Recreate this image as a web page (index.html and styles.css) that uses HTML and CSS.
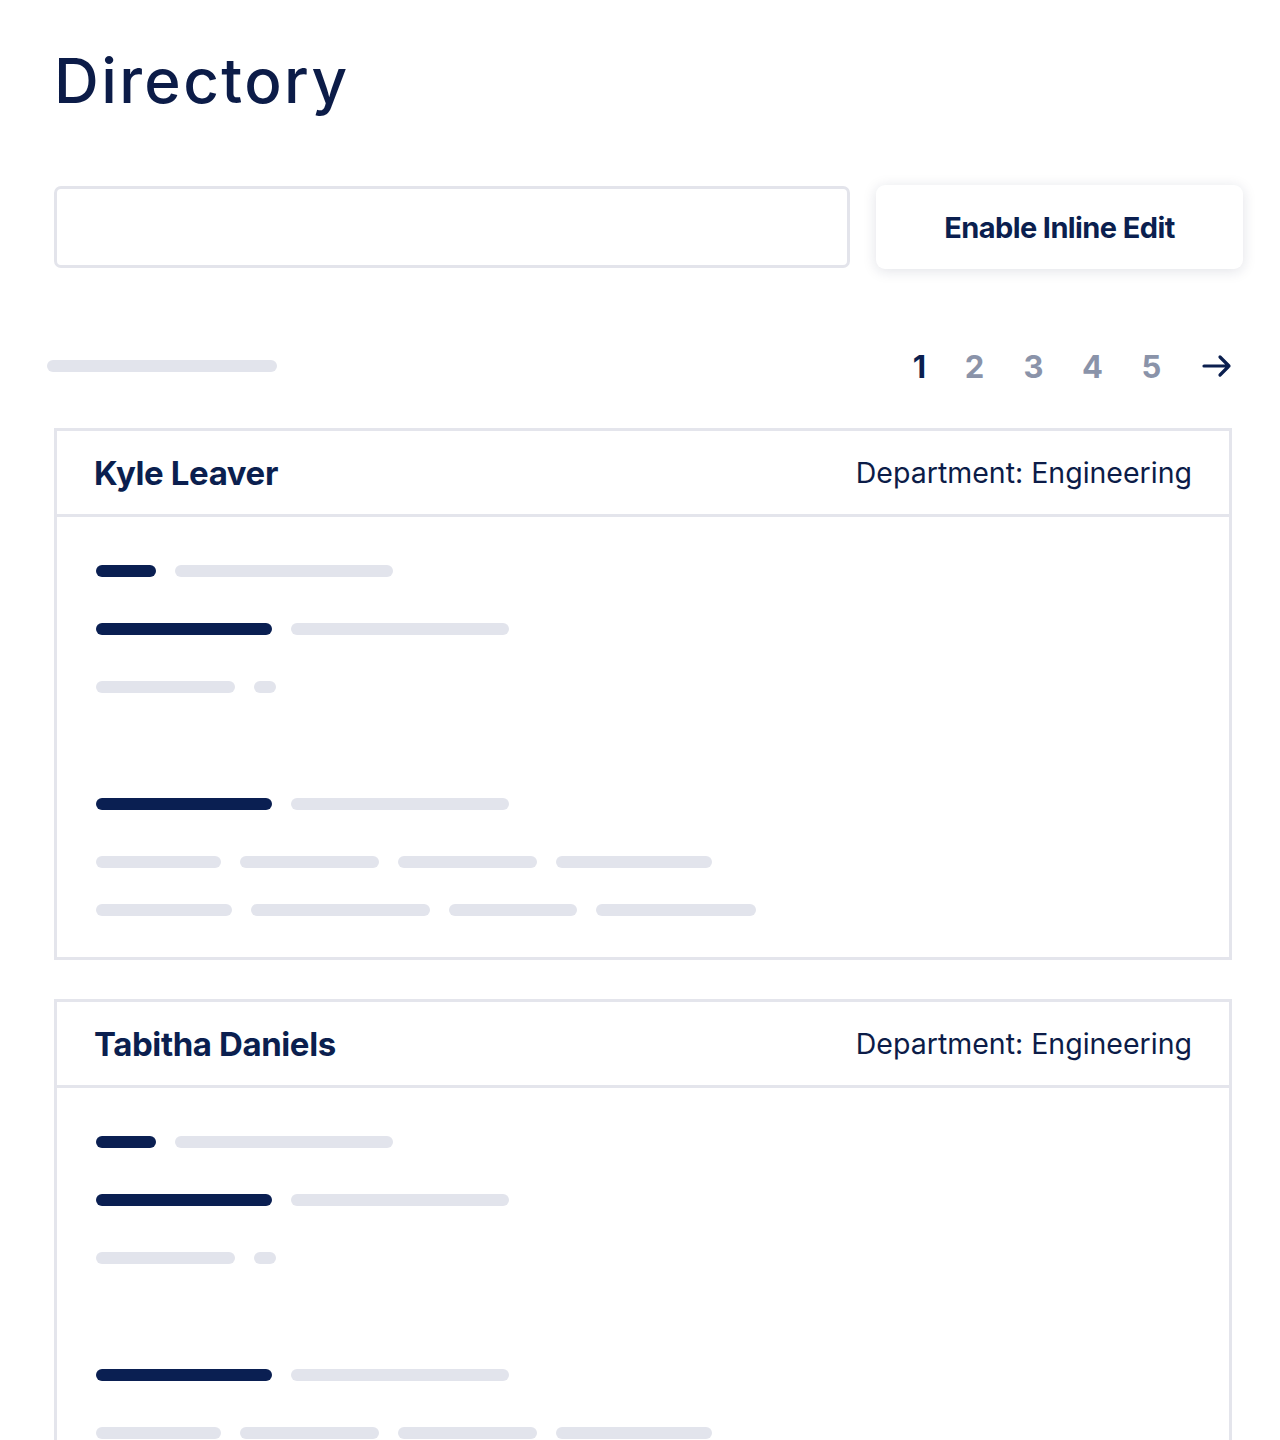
FILE: index.html
```html
<!DOCTYPE html>
<html lang="en">
<head>
  <meta charset="UTF-8" />
  <title>Directory</title>
  <link rel="stylesheet" href="styles.css">
</head>
<body>

<div class="page">
  <h1>Directory</h1>

  <div class="toolbar">
    <div class="search"></div>
    <button class="edit-btn">Enable Inline Edit</button>
  </div>

  <div class="pager-row">
    <div class="bar gray count"></div>
    <div class="pager">
      <span class="page-num current">1</span>
      <span class="page-num">2</span>
      <span class="page-num">3</span>
      <span class="page-num">4</span>
      <span class="page-num">5</span>
      <span class="page-next">
        <svg width="30" height="24" viewBox="0 0 30 24" fill="none" stroke="#0b1f4f" stroke-width="3.2" stroke-linecap="round" stroke-linejoin="round">
          <path d="M2 12h25M18 3l9 9-9 9"/>
        </svg>
      </span>
    </div>
  </div>

  <!-- Person cards -->
  <div class="card">
    <div class="card-head">
      <span class="name">Kyle Leaver</span>
      <span class="dept">Department: Engineering</span>
    </div>
    <div class="card-body">
      <div class="row"><div class="bar dark w60"></div><div class="bar gray w218"></div></div>
      <div class="row"><div class="bar dark w176"></div><div class="bar gray w218"></div></div>
      <div class="row"><div class="bar gray w139"></div><div class="bar gray w22"></div></div>
      <div class="row section"><div class="bar dark w176"></div><div class="bar gray w218"></div></div>
      <div class="row"><div class="bar gray w125"></div><div class="bar gray w139"></div><div class="bar gray w139"></div><div class="bar gray w156"></div></div>
      <div class="row tight"><div class="bar gray w136"></div><div class="bar gray w179"></div><div class="bar gray w128"></div><div class="bar gray w160"></div></div>
    </div>
  </div>

  <div class="card">
    <div class="card-head">
      <span class="name">Tabitha Daniels</span>
      <span class="dept">Department: Engineering</span>
    </div>
    <div class="card-body">
      <div class="row"><div class="bar dark w60"></div><div class="bar gray w218"></div></div>
      <div class="row"><div class="bar dark w176"></div><div class="bar gray w218"></div></div>
      <div class="row"><div class="bar gray w139"></div><div class="bar gray w22"></div></div>
      <div class="row section"><div class="bar dark w176"></div><div class="bar gray w218"></div></div>
      <div class="row"><div class="bar gray w125"></div><div class="bar gray w139"></div><div class="bar gray w139"></div><div class="bar gray w156"></div></div>
      <div class="row tight"><div class="bar gray w136"></div><div class="bar gray w179"></div><div class="bar gray w128"></div><div class="bar gray w160"></div></div>
    </div>
  </div>
</div>

</body>
</html>
```

FILE: styles.css
```css
body {
  margin: 0;
  background: #ffffff;
  font-family: Inter, 'Noto Sans', sans-serif;
  color: #0b1f4f;
}
.page {
  padding: 0 48px 0 54px;
}
h1 {
  margin: 0;
  padding-top: 43px;
  height: 76px;
  font-size: 62px;
  font-weight: 500;
  letter-spacing: 2.4px;
  line-height: 76px;
  color: #0c1c48;
}
.toolbar {
  display: flex;
  align-items: center;
  gap: 26px;
  margin-top: 66px;
  margin-right: -11px;
}
.search {
  width: 790px;
  height: 76px;
  border: 3px solid #e3e4eb;
  border-radius: 7px;
}
.edit-btn {
  flex: 1;
  height: 84px;
  border: none;
  border-radius: 9px;
  background: #fff;
  box-shadow: 0 2px 14px rgba(20, 30, 70, 0.13);
  font-family: Inter, sans-serif;
  font-size: 29px;
  font-weight: 700;
  letter-spacing: -0.6px;
  color: #0b1f4f;
}
.pager-row {
  display: flex;
  align-items: center;
  justify-content: space-between;
  margin-top: 77px;
  height: 40px;
}
.count {
  width: 230px;
  margin-left: -7px;
}
.pager {
  display: flex;
  align-items: center;
}
.page-num {
  width: 59px;
  text-align: center;
  font-size: 31px;
  font-weight: 700;
  color: #8a93a9;
}
.page-num.current {
  color: #0b1f4f;
  padding-left: 8px;
  width: 51px;
}
.page-next {
  display: flex;
  margin-left: 21px;
}
.card {
  border: 3px solid #e4e5ec;
  margin-top: 42px;
}
.card + .card {
  margin-top: 39px;
}
.card-head {
  display: flex;
  align-items: center;
  justify-content: space-between;
  height: 83px;
  padding: 0 37px 0 37px;
  border-bottom: 3px solid #e4e5ec;
}
.name {
  font-size: 33px;
  font-weight: 700;
  letter-spacing: -0.4px;
}
.dept {
  font-size: 28.5px;
  font-weight: 400;
  color: #0c1c48;
}
.card-body {
  display: flex;
  flex-direction: column;
  padding: 48px 40px 41px 39px;
}
.row {
  display: flex;
  gap: 19px;
  margin-top: 46px;
}
.row:first-child {
  margin-top: 0;
}
.row.section {
  margin-top: 105px;
}
.row.tight {
  margin-top: 36px;
}
.bar {
  height: 12px;
  border-radius: 6px;
}
.bar.dark { background: #0a1f52; }
.bar.gray { background: #e2e4ec; }
.w22 { width: 22px; }
.w60 { width: 60px; }
.w125 { width: 125px; }
.w128 { width: 128px; }
.w136 { width: 136px; }
.w139 { width: 139px; }
.w156 { width: 156px; }
.w160 { width: 160px; }
.w176 { width: 176px; }
.w179 { width: 179px; }
.w218 { width: 218px; }
```
